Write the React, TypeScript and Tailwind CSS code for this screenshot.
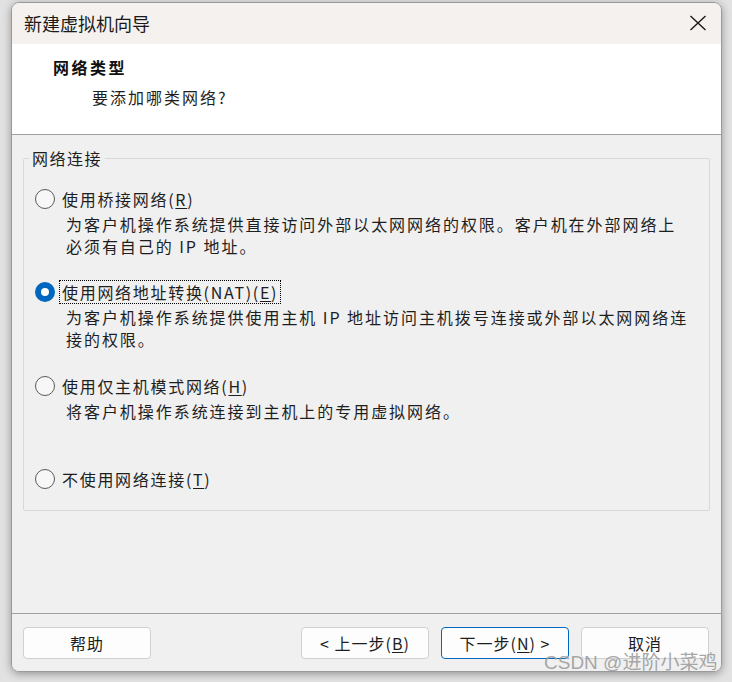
import React from "react";

const cjk = { fontFamily: '"Noto Sans CJK SC", "Noto Sans", sans-serif' };

function Radio({ checked }: { checked?: boolean }) {
  if (checked) {
    return (
      <span className="flex h-[20px] w-[20px] shrink-0 items-center justify-center rounded-full bg-[#0067c0]">
        <span className="h-[8px] w-[8px] rounded-full bg-white" />
      </span>
    );
  }
  return <span className="h-[20px] w-[20px] shrink-0 rounded-full border border-[#5a5a5a] bg-[#f7f7f7]" />;
}

function Option({
  checked,
  label,
  keyChar,
  lines,
  focus,
  className,
}: {
  checked?: boolean;
  label: string;
  keyChar: string;
  lines: string[];
  focus?: boolean;
  className?: string;
}) {
  return (
    <div className={className}>
      <div className="flex h-[24px] items-center">
        <Radio checked={checked} />
        <span
          className={
            "ml-[4px] whitespace-nowrap px-[2px] text-[16px] leading-[22px] tracking-[1.7px] text-[#1e1e1e] " +
            (focus ? "border border-dotted border-black" : "border border-transparent")
          }
        >
          {label}(<span className="underline underline-offset-2">{keyChar}</span>)
        </span>
      </div>
      {lines.length > 0 && (
        <div className="mt-[2px] pl-[31px]">
          {lines.map((l, i) => (
            <div key={i} className="whitespace-nowrap text-[16px] leading-[22px] tracking-[1.95px] text-[#1e1e1e]">
              {l}
            </div>
          ))}
        </div>
      )}
    </div>
  );
}

function Btn({ children, primary }: { children: React.ReactNode; primary?: boolean }) {
  return (
    <button
      className={
        "flex h-[32px] w-[128px] items-center justify-center rounded-[4px] bg-[#fdfdfd] text-[16px] tracking-[1px] text-[#1e1e1e] " +
        (primary ? "border border-[#0067c0]" : "border border-[#d0d0d0]")
      }
    >
      {children}
    </button>
  );
}

export default function App() {
  return (
    <div className="relative h-[682px] w-[732px] overflow-hidden bg-[#e2e2e2] pl-[11px] pt-[2px]" style={cjk}>
      <div className="flex h-[670px] w-[711px] flex-col overflow-hidden rounded-[8px] border border-[#9a9a9a] shadow-[0_2px_8px_rgba(0,0,0,0.35)]">
        {/* title bar */}
        <div className="flex h-[41px] shrink-0 items-center justify-between bg-[#f4f1ee] pb-[2px] pl-[12px] pr-[14px]">
          <span className="text-[18px] leading-none text-[#1a1a1a]">新建虚拟机向导</span>
          <svg width="18" height="16" viewBox="0 0 18 16" className="mt-[1px]">
            <path d="M1.5 1 L16.5 15 M16.5 1 L1.5 15" stroke="#1a1a1a" strokeWidth="1.4" fill="none" />
          </svg>
        </div>
        {/* header */}
        <div className="h-[90px] shrink-0 bg-white pl-[41px] pt-[12px]">
          <div className="text-[16px] font-bold leading-[22px] tracking-[2.5px] text-[#111]">网络类型</div>
          <div className="ml-[39px] mt-[8px] text-[16px] leading-[22px] tracking-[2px] text-[#1e1e1e]">要添加哪类网络?</div>
        </div>
        <div className="h-[1px] shrink-0 bg-[#a0a0a0]" />
        {/* body */}
        <div className="h-[478px] shrink-0 bg-[#f0f0f0] px-[11px] pt-[12px]">
          <fieldset className="h-[364px] rounded-[2px] border border-[#d9d9d9] pl-[11px] pr-[10px]">
            <legend className="ml-[-6px] px-[3px] text-[16px] leading-[22px] tracking-[1.5px] text-[#1e1e1e]">网络连接</legend>
            <Option
              className="mt-[18px]"
              label="使用桥接网络"
              keyChar="R"
              lines={["为客户机操作系统提供直接访问外部以太网网络的权限。客户机在外部网络上", "必须有自己的 IP 地址。"]}
            />
            <Option
              className="mt-[23px]"
              checked
              focus
              label="使用网络地址转换(NAT)"
              keyChar="E"
              lines={["为客户机操作系统提供使用主机 IP 地址访问主机拨号连接或外部以太网网络连", "接的权限。"]}
            />
            <Option
              className="mt-[24px]"
              label="使用仅主机模式网络"
              keyChar="H"
              lines={["将客户机操作系统连接到主机上的专用虚拟网络。"]}
            />
            <Option className="mt-[45px]" label="不使用网络连接" keyChar="T" lines={[]} />
          </fieldset>
        </div>
        <div className="h-[1px] shrink-0 bg-[#a0a0a0]" />
        {/* footer */}
        <div className="flex h-[57px] shrink-0 items-start bg-[#f0f0f0] pl-[11px] pr-[12px] pt-[13px]">
          <Btn>帮助</Btn>
          <div className="ml-auto flex gap-[12px]">
            <Btn>
              &lt; 上一步(<span className="underline underline-offset-2">B</span>)
            </Btn>
            <Btn primary>
              下一步(<span className="underline underline-offset-2">N</span>) &gt;
            </Btn>
            <Btn>取消</Btn>
          </div>
        </div>
      </div>
      {/* watermark */}
      <div
        className="absolute left-[544px] top-[654px] whitespace-nowrap text-[19px] leading-[18px] text-[#9c9c9c]/90"
        style={{ fontFamily: '"Liberation Sans", "Noto Sans CJK SC", sans-serif' }}
      >
        CSDN @进阶小菜鸡
      </div>
    </div>
  );
}
